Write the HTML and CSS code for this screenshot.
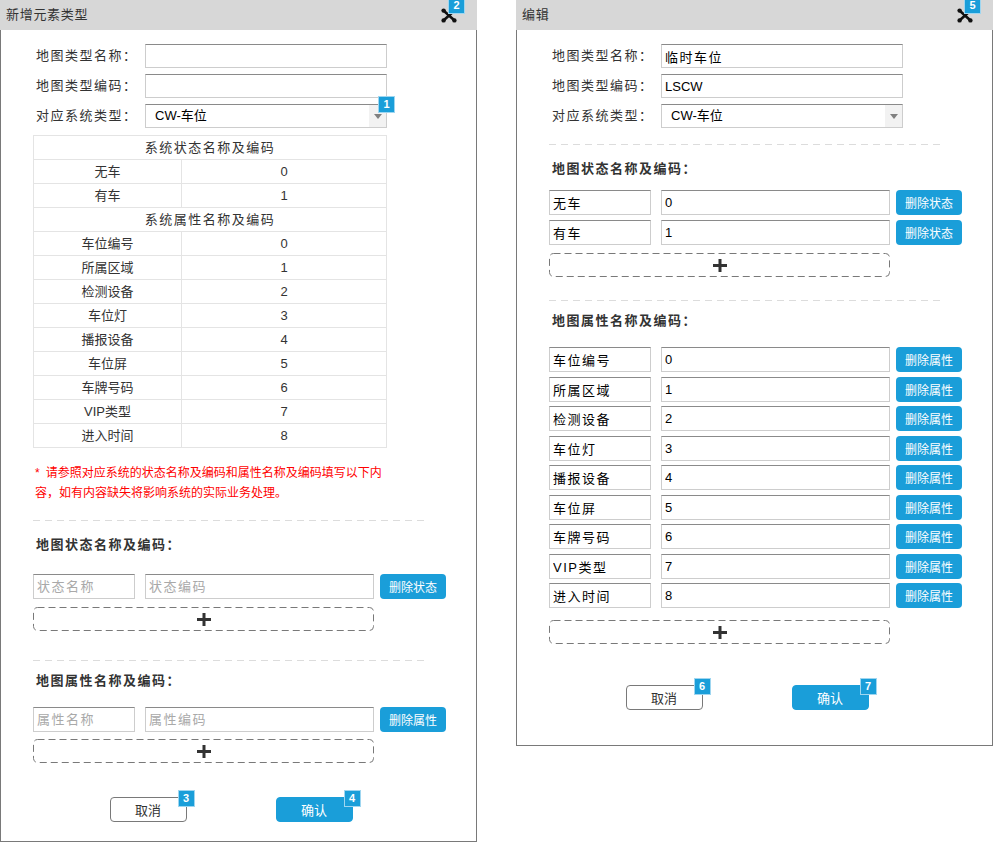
FILE: index.html
```html
<!DOCTYPE html>
<html lang="zh-CN">
<head>
<meta charset="utf-8">
<title>元素类型</title>
<link rel="stylesheet" href="styles.css">
</head>
<body>
<div class="page">
  <section class="panel">
    <header class="panel-head">
      <span class="panel-title">新增元素类型</span>
      <span class="close">
        <svg class="close-icon" width="16" height="15" viewBox="0 0 16 15"><g stroke="#111" stroke-width="2.6" stroke-linecap="round"><line x1="2.5" y1="2.5" x2="13.5" y2="12.5"/><line x1="13.5" y1="2.5" x2="2.5" y2="12.5"/></g><g fill="#111"><circle cx="2.6" cy="2.6" r="2.2"/><circle cx="13.4" cy="2.6" r="2.2"/><circle cx="2.6" cy="12.4" r="2.2"/><circle cx="13.4" cy="12.4" r="2.2"/></g></svg>
        <span class="badge badge-close">2</span>
      </span>
    </header>
    <div class="panel-body body-add">
      <div class="form">
        <div class="form-row"><label class="form-label">地图类型名称：</label><input class="field" value=""></div>
        <div class="form-row"><label class="form-label">地图类型编码：</label><input class="field" value=""></div>
        <div class="form-row"><label class="form-label">对应系统类型：</label>
          <div class="select"><span class="select-text">CW-车位</span><span class="select-arrow"><i class="tri"></i></span><span class="badge badge-select">1</span></div>
        </div>
      </div>
      <table class="sys-table">
        <tr class="group"><td colspan="2">系统状态名称及编码</td></tr>
        <tr><td class="c1">无车</td><td>0</td></tr>
        <tr><td class="c1">有车</td><td>1</td></tr>
        <tr class="group"><td colspan="2">系统属性名称及编码</td></tr>
        <tr><td class="c1">车位编号</td><td>0</td></tr>
        <tr><td class="c1">所属区域</td><td>1</td></tr>
        <tr><td class="c1">检测设备</td><td>2</td></tr>
        <tr><td class="c1">车位灯</td><td>3</td></tr>
        <tr><td class="c1">播报设备</td><td>4</td></tr>
        <tr><td class="c1">车位屏</td><td>5</td></tr>
        <tr><td class="c1">车牌号码</td><td>6</td></tr>
        <tr><td class="c1">VIP类型</td><td>7</td></tr>
        <tr><td class="c1">进入时间</td><td>8</td></tr>
      </table>
      <p class="note"><span class="star">*</span>请参照对应系统的状态名称及编码和属性名称及编码填写以下内<br>容，如有内容缺失将影响系统的实际业务处理。</p>
      <div class="sep sep-a1"></div>
      <h3 class="sec-title title-1">地图状态名称及编码：</h3>
      <div class="pair-row row-a1"><input class="field field-name" placeholder="状态名称"><input class="field field-code" placeholder="状态编码"><button class="btn-del">删除状态</button></div>
      <div class="add-box add-a1"><svg class="add-border" width="341" height="24"><rect x="0.5" y="0.5" width="340" height="23" rx="4" fill="none" stroke="#797979" stroke-dasharray="7 4"/></svg><svg width="14" height="13" viewBox="0 0 14 13"><path d="M0 6.5H14M7 0V13" stroke="#333" stroke-width="3"/></svg></div>
      <div class="sep sep-a2"></div>
      <h3 class="sec-title title-2">地图属性名称及编码：</h3>
      <div class="pair-row row-a2"><input class="field field-name" placeholder="属性名称"><input class="field field-code" placeholder="属性编码"><button class="btn-del">删除属性</button></div>
      <div class="add-box add-a2"><svg class="add-border" width="341" height="24"><rect x="0.5" y="0.5" width="340" height="23" rx="4" fill="none" stroke="#797979" stroke-dasharray="7 4"/></svg><svg width="14" height="13" viewBox="0 0 14 13"><path d="M0 6.5H14M7 0V13" stroke="#333" stroke-width="3"/></svg></div>
      <div class="actions act-a">
        <button class="btn btn-cancel">取消<span class="badge badge-btn">3</span></button>
        <button class="btn btn-ok">确认<span class="badge badge-btn">4</span></button>
      </div>
    </div>
  </section>

  <section class="panel">
    <header class="panel-head">
      <span class="panel-title">编辑</span>
      <span class="close">
        <svg class="close-icon" width="16" height="15" viewBox="0 0 16 15"><g stroke="#111" stroke-width="2.6" stroke-linecap="round"><line x1="2.5" y1="2.5" x2="13.5" y2="12.5"/><line x1="13.5" y1="2.5" x2="2.5" y2="12.5"/></g><g fill="#111"><circle cx="2.6" cy="2.6" r="2.2"/><circle cx="13.4" cy="2.6" r="2.2"/><circle cx="2.6" cy="12.4" r="2.2"/><circle cx="13.4" cy="12.4" r="2.2"/></g></svg>
        <span class="badge badge-close">5</span>
      </span>
    </header>
    <div class="panel-body body-edit">
      <div class="form">
        <div class="form-row"><label class="form-label">地图类型名称：</label><input class="field" value="临时车位"></div>
        <div class="form-row"><label class="form-label">地图类型编码：</label><input class="field field-latin" value="LSCW"></div>
        <div class="form-row"><label class="form-label">对应系统类型：</label>
          <div class="select"><span class="select-text">CW-车位</span><span class="select-arrow"><i class="tri"></i></span></div>
        </div>
      </div>
      <div class="sep sep-b1"></div>
      <h3 class="sec-title title-1">地图状态名称及编码：</h3>
      <div class="rows rows-b1">
        <div class="pair-row"><input class="field field-name" value="无车"><input class="field field-code" value="0"><button class="btn-del">删除状态</button></div>
        <div class="pair-row"><input class="field field-name" value="有车"><input class="field field-code" value="1"><button class="btn-del">删除状态</button></div>
      </div>
      <div class="add-box add-b1"><svg class="add-border" width="341" height="24"><rect x="0.5" y="0.5" width="340" height="23" rx="4" fill="none" stroke="#797979" stroke-dasharray="7 4"/></svg><svg width="14" height="13" viewBox="0 0 14 13"><path d="M0 6.5H14M7 0V13" stroke="#333" stroke-width="3"/></svg></div>
      <div class="sep sep-b2"></div>
      <h3 class="sec-title title-2">地图属性名称及编码：</h3>
      <div class="rows rows-b2">
        <div class="pair-row"><input class="field field-name" value="车位编号"><input class="field field-code" value="0"><button class="btn-del">删除属性</button></div>
        <div class="pair-row"><input class="field field-name" value="所属区域"><input class="field field-code" value="1"><button class="btn-del">删除属性</button></div>
        <div class="pair-row"><input class="field field-name" value="检测设备"><input class="field field-code" value="2"><button class="btn-del">删除属性</button></div>
        <div class="pair-row"><input class="field field-name" value="车位灯"><input class="field field-code" value="3"><button class="btn-del">删除属性</button></div>
        <div class="pair-row"><input class="field field-name" value="播报设备"><input class="field field-code" value="4"><button class="btn-del">删除属性</button></div>
        <div class="pair-row"><input class="field field-name" value="车位屏"><input class="field field-code" value="5"><button class="btn-del">删除属性</button></div>
        <div class="pair-row"><input class="field field-name" value="车牌号码"><input class="field field-code" value="6"><button class="btn-del">删除属性</button></div>
        <div class="pair-row"><input class="field field-name" value="VIP类型"><input class="field field-code" value="7"><button class="btn-del">删除属性</button></div>
        <div class="pair-row"><input class="field field-name" value="进入时间"><input class="field field-code" value="8"><button class="btn-del">删除属性</button></div>
      </div>
      <div class="add-box add-b2"><svg class="add-border" width="341" height="24"><rect x="0.5" y="0.5" width="340" height="23" rx="4" fill="none" stroke="#797979" stroke-dasharray="7 4"/></svg><svg width="14" height="13" viewBox="0 0 14 13"><path d="M0 6.5H14M7 0V13" stroke="#333" stroke-width="3"/></svg></div>
      <div class="actions act-b">
        <button class="btn btn-cancel">取消<span class="badge badge-btn">6</span></button>
        <button class="btn btn-ok">确认<span class="badge badge-btn">7</span></button>
      </div>
    </div>
  </section>
</div>
</body>
</html>
```

FILE: styles.css
```css
* { box-sizing: border-box; }
html, body { margin: 0; padding: 0; background: #fff; }
body {
  font-family: "Liberation Sans", "Noto Sans CJK SC", sans-serif;
  font-size: 13px;
  color: #333;
}
.page { display: flex; align-items: flex-start; gap: 39px; width: 993px; }
.panel { width: 477px; display: flex; flex-direction: column; }

.panel-head {
  height: 30px;
  background: #d7d7d7;
  display: flex;
  align-items: center;
  justify-content: space-between;
  padding: 0 20px 0 6px;
}
.panel-title { font-size: 13px; letter-spacing: 0.7px; color: #333; line-height: 30px; }
.close { position: relative; width: 16px; height: 15px; display: block; }
.close-icon { display: block; }

.badge {
  position: absolute;
  width: 17px;
  height: 17px;
  background: #1a9ed9;
  border: 1px solid #9fd6f0;
  color: #fff;
  font: bold 11px/15px "Liberation Sans", sans-serif;
  text-align: center;
  letter-spacing: 0;
}
.badge-close { left: 7px; top: -11px; }
.badge-select { right: -9px; top: -9px; }
.badge-btn { right: -9px; top: -8px; }

.panel-body {
  border: 1px solid #797979;
  border-top: 0;
  padding: 14px 0 0 32px;
}
.body-add { height: 812px; }
.body-edit { height: 716px; }

.form { display: flex; flex-direction: column; gap: 6px; }
.form-row { display: grid; grid-template-columns: 112px 242px; align-items: center; height: 24px; }
.form-label { padding-left: 3px; letter-spacing: 1.5px; line-height: 24px; color: #333; }

.field {
  display: block;
  height: 24px;
  margin: 0;
  padding: 0 3px;
  border: 1px solid #cdcdcd;
  border-top-color: #8a8a8a;
  background: #fff;
  font-family: "Liberation Sans", "Noto Sans CJK SC", sans-serif;
  font-size: 13px;
  letter-spacing: 1.5px;
  color: #000;
  outline: none;
}
.field::placeholder { color: #a9a9a9; }
.field-latin { letter-spacing: 0; }

.select {
  position: relative;
  display: flex;
  height: 24px;
  border: 1px solid #cdcdcd;
  border-top-color: #8a8a8a;
  background: #fff;
}
.select-text { flex: 1; padding-left: 9px; line-height: 22px; color: #000; }
.select-arrow {
  width: 17px;
  background: #f2f2f2;
  display: flex;
  align-items: center;
  justify-content: center;
}
.tri {
  width: 0; height: 0;
  border-left: 4px solid transparent;
  border-right: 4px solid transparent;
  border-top: 5px solid #808080;
}

.sys-table { margin-top: 7px; width: 354px; border-collapse: collapse; }
.sys-table td {
  border: 1px solid #e4e4e4;
  height: 24px;
  padding: 0;
  text-align: center;
  font-size: 13px;
  line-height: 22px;
  color: #333;
}
.sys-table td.c1 { width: 148px; }
.sys-table .group td { letter-spacing: 1.5px; }

.note { margin: 15px 0 0; padding-left: 2px; font-size: 12px; line-height: 20px; color: #ff0000; }
.star { margin-right: 6px; }

.sep {
  width: 396px;
  height: 1px;
  background: repeating-linear-gradient(90deg, #dcdcdc 0 7px, transparent 7px 12px);
}
.sep-a1 { margin-top: 17px; }
.sep-a2 { margin-top: 29px; }
.sep-b1 { margin-top: 16px; }
.sep-b2 { margin-top: 23px; }

.sec-title { margin: 0; padding-left: 3px; font-size: 13px; font-weight: bold; letter-spacing: 1.5px; line-height: 20px; color: #333; }
.title-1 { margin-top: 14px; }
.title-2 { margin-top: 10px; }

.pair-row { display: flex; align-items: center; height: 25px; }
.field-name { width: 102px; height: 25px; }
.field-code { width: 229px; height: 25px; margin-left: 10px; }
.btn-del {
  width: 66px;
  height: 25px;
  margin: 0 0 0 6px;
  padding: 0;
  border: 0;
  border-radius: 4px;
  background: #1a9ed9;
  color: #fff;
  font-family: "Liberation Sans", "Noto Sans CJK SC", sans-serif;
  font-size: 12px;
}
.row-a1 { margin-top: 19px; }
.row-a2 { margin-top: 16px; }

.rows { display: flex; flex-direction: column; }
.rows-b1 { margin-top: 11px; gap: 5px; }
.rows-b2 { margin-top: 16px; gap: 4.5px; }

.add-box {
  position: relative;
  width: 341px;
  height: 24px;
  display: flex;
  align-items: center;
  justify-content: center;
}
.add-border { position: absolute; left: 0; top: 0; }
.add-a1 { margin-top: 8px; }
.add-a2 { margin-top: 7px; }
.add-b1 { margin-top: 8px; }
.add-b2 { margin-top: 12px; }

.actions { width: 396px; display: flex; justify-content: center; gap: 89px; }
.act-a { margin-top: 34px; }
.act-b { margin-top: 41px; }
.btn {
  position: relative;
  width: 77px;
  height: 25px;
  margin: 0;
  padding: 0;
  border-radius: 4px;
  font-family: "Liberation Sans", "Noto Sans CJK SC", sans-serif;
  font-size: 13px;
}
.btn-cancel { background: #fff; border: 1px solid #797979; color: #333; }
.btn-ok { background: #1a9ed9; border: 1px solid #1a9ed9; color: #fff; }
```
